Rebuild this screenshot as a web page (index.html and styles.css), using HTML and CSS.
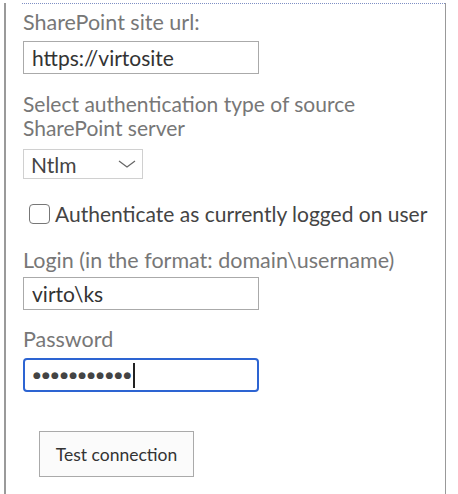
FILE: index.html
```html
<!DOCTYPE html>
<html lang="en">

<head>
    <meta charset="UTF-8">
    <meta name="viewport" content="width=device-width, initial-scale=1.0">
    <title>Source connection</title>
    <link rel="stylesheet" href="styles.css">
</head>

<body>
    <div class="panel">
        <div class="form">
            <div class="label label-first">SharePoint site url:</div>
            <input class="field" type="text" value="https://virtosite">

            <div class="label label-wide">Select authentication type of source SharePoint server</div>
            <div class="select-wrap">
                <select class="select">
                    <option>Ntlm</option>
                    <option>Claims</option>
                </select>
                <svg class="chevron" width="18" height="8" viewBox="0 0 18 8">
                    <polyline points="1,1 9,7 17,1" fill="none" stroke="#666" stroke-width="1.2" />
                </svg>
            </div>

            <label class="check-row">
                <input class="check" type="checkbox">
                <span>Authenticate as currently logged on user</span>
            </label>

            <div class="label label-login">Login (in the format: domain\username)</div>
            <input class="field" type="text" value="virto\ks">

            <div class="label label-pass">Password</div>
            <div class="field field-focused">
                <span class="dots">●●●●●●●●●●●</span><span class="caret"></span>
            </div>

            <button class="test-button" type="button">Test connection</button>
        </div>
    </div>
</body>

</html>
```

FILE: styles.css
```css
body {
    margin: 0;
    font-family: Lato, 'Open Sans', sans-serif;
    background-color: #ffffff;
}

/* Outer panel with grey side rules */
.panel {
    margin-left: 4px;
    width: 442px;
    height: 494px;
    box-sizing: border-box;
    border-left: 2px solid #9a9a9a;
    border-right: 1px solid #999;
}

.form {
    margin: 3px 0 0 16px;
    padding-left: 1px;
    border-top: 1px dotted #7f8fc4;
}

.label {
    display: block;
    font-size: 21.5px;
    line-height: 24px;
    color: #777;
    margin: 18px 0 7px;
}

.label-first {
    margin-top: 6px;
}

.label-wide {
    width: 340px;
    font-size: 21px;
    margin-bottom: 9px;
}

.label-login {
    margin-top: 22px;
    margin-bottom: 5px;
}

.label-pass {
    margin-top: 17px;
    margin-bottom: 7px;
}

.field {
    display: block;
    width: 236px;
    height: 33px;
    box-sizing: border-box;
    margin: 0;
    padding: 0 8px;
    border: 1px solid #aaa;
    border-radius: 0;
    font-family: Lato, 'Open Sans', sans-serif;
    font-size: 21px;
    color: #333;
    background-color: #fff;
    outline: none;
}

.field-focused {
    height: 34px;
    padding-left: 8px;
    border: 2px solid #2d64d2;
    border-radius: 4px;
    display: flex;
    align-items: center;
}

.dots {
    font-family: 'DejaVu Sans', sans-serif;
    font-size: 9px;
    letter-spacing: 1.2px;
    color: #444;
}

.caret {
    display: inline-block;
    width: 2px;
    height: 25px;
    margin-left: 0;
    background-color: #222;
}

/* Dropdown */
.select-wrap {
    position: relative;
    width: 120px;
}

.select {
    display: block;
    width: 120px;
    height: 30px;
    margin: 0;
    padding: 0 0 0 7px;
    border: 1px solid #d0d0d0;
    border-radius: 0;
    background-color: #fff;
    appearance: none;
    -webkit-appearance: none;
    font-family: Lato, 'Open Sans', sans-serif;
    font-size: 21px;
    color: #444;
}

.chevron {
    position: absolute;
    left: 95px;
    top: 11px;
}

/* Checkbox line */
.check-row {
    display: flex;
    align-items: center;
    margin-top: 23px;
    font-size: 21px;
    line-height: 24px;
    color: #444;
}

.check {
    appearance: none;
    -webkit-appearance: none;
    width: 21px;
    height: 20px;
    margin: 0 5px 0 6px;
    box-sizing: border-box;
    border: 1.5px solid #777;
    border-radius: 4px;
    background-color: #fff;
}

.test-button {
    display: block;
    margin: 39px 0 0 16px;
    width: 155px;
    height: 46px;
    border: 1px solid #aaa;
    background-color: #fbfbfb;
    font-family: Lato, 'Open Sans', sans-serif;
    font-size: 17.5px;
    color: #333;
}
```
